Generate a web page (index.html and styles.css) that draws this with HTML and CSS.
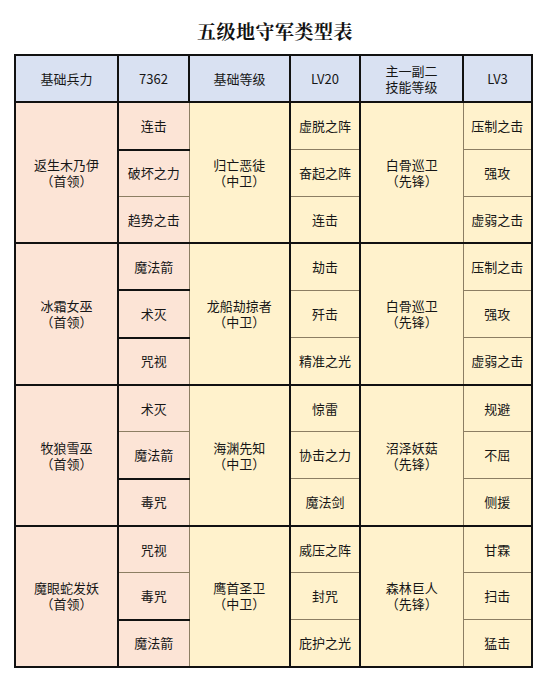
FILE: index.html
```html
<!DOCTYPE html>
<html lang="zh">
<head>
<meta charset="utf-8">
<title>五级地守军类型表</title>
<link rel="stylesheet" href="styles.css">
</head>
<body>
<h1 class="title">五级地守军类型表</h1>
<table class="grid">
  <colgroup>
    <col class="w1"><col class="w2"><col class="w3"><col class="w4"><col class="w5"><col class="w6">
  </colgroup>
  <thead>
    <tr>
      <th>基础兵力</th><th>7362</th><th>基础等级</th><th>LV20</th><th>主一副二<br>技能等级</th><th>LV3</th>
    </tr>
  </thead>
  <tbody>
    <tr class="gtop">
      <td rowspan="3" class="lead">返生木乃伊<br>（首领）</td>
      <td class="sk bb">连击</td>
      <td rowspan="3" class="mid">归亡恶徒<br>（中卫）</td>
      <td class="sk2">虚脱之阵</td>
      <td rowspan="3" class="van">白骨巡卫<br>（先锋）</td>
      <td class="last">压制之击</td>
    </tr>
    <tr><td class="sk">破坏之力</td><td class="sk2">奋起之阵</td><td class="last">强攻</td></tr>
    <tr class="gbot"><td class="sk">趋势之击</td><td class="sk2">连击</td><td class="last">虚弱之击</td></tr>

    <tr class="gtop">
      <td rowspan="3" class="lead">冰霜女巫<br>（首领）</td>
      <td class="sk bb">魔法箭</td>
      <td rowspan="3" class="mid">龙船劫掠者<br>（中卫）</td>
      <td class="sk2">劫击</td>
      <td rowspan="3" class="van">白骨巡卫<br>（先锋）</td>
      <td class="last">压制之击</td>
    </tr>
    <tr><td class="sk bb">术灭</td><td class="sk2">歼击</td><td class="last">强攻</td></tr>
    <tr class="gbot"><td class="sk">咒视</td><td class="sk2">精准之光</td><td class="last">虚弱之击</td></tr>

    <tr class="gtop">
      <td rowspan="3" class="lead">牧狼雪巫<br>（首领）</td>
      <td class="sk">术灭</td>
      <td rowspan="3" class="mid">海渊先知<br>（中卫）</td>
      <td class="sk2">惊雷</td>
      <td rowspan="3" class="van">沼泽妖菇<br>（先锋）</td>
      <td class="last">规避</td>
    </tr>
    <tr><td class="sk bb">魔法箭</td><td class="sk2">协击之力</td><td class="last">不屈</td></tr>
    <tr class="gbot"><td class="sk">毒咒</td><td class="sk2">魔法剑</td><td class="last">侧援</td></tr>

    <tr class="gtop">
      <td rowspan="3" class="lead">魔眼蛇发妖<br>（首领）</td>
      <td class="sk">咒视</td>
      <td rowspan="3" class="mid">鹰首圣卫<br>（中卫）</td>
      <td class="sk2">威压之阵</td>
      <td rowspan="3" class="van">森林巨人<br>（先锋）</td>
      <td class="last">甘霖</td>
    </tr>
    <tr><td class="sk bb">毒咒</td><td class="sk2">封咒</td><td class="last">扫击</td></tr>
    <tr class="gbot"><td class="sk">魔法箭</td><td class="sk2">庇护之光</td><td class="last">猛击</td></tr>
  </tbody>
</table>
</body>
</html>
```

FILE: styles.css
```css
html, body {
  margin: 0;
  padding: 0;
  background: #ffffff;
}

body {
  font-family: "Noto Sans CJK SC", "Noto Sans", sans-serif;
  color: #161616;
}

.title {
  margin: 0;
  padding: 19px 0 11px;
  font-family: "Noto Serif CJK SC", "Noto Sans CJK SC", serif;
  font-size: 19px;
  line-height: 24px;
  font-weight: bold;
  text-align: center;
  color: #111;
  letter-spacing: 0.5px;
}

.grid {
  margin-left: 14px;
  border-collapse: collapse;
  table-layout: fixed;
  width: 517px;
  font-size: 13px;
  line-height: 16px;
  border: 2px solid #111;
}

.w1 { width: 103px; }
.w2 { width: 71px; }
.w3 { width: 101px; }
.w4 { width: 70px; }
.w5 { width: 103px; }
.w6 { width: 69px; }

.grid th,
.grid td {
  padding: 0;
  text-align: center;
  vertical-align: middle;
  height: 45.3px;
  font-weight: normal;
}

.grid th {
  background: #d9e1f2;
  border: 2px solid #111;
}

.grid td {
  border: 1px solid #8c7e63;
  background: #fff2cc;
}

.grid td.lead {
  background: #fce4d6;
  border: 2px solid #111;
}

.grid td.sk {
  background: #fce4d6;
  border-left: 2px solid #111;
}

.grid td.bb {
  border-bottom: 2px solid #111;
}

.grid td.mid {
  border-right: 2px solid #111;
}

.grid td.sk2 {
  border-left: 2px solid #111;
  border-right: 2px solid #111;
}

.grid td.van {
  border-left: 2px solid #111;
}

.grid td.last {
  border-right: 2px solid #111;
}

.grid tr.gtop td {
  border-top: 2px solid #111;
}

.grid tr.gbot td {
  border-bottom: 2px solid #111;
}
```
